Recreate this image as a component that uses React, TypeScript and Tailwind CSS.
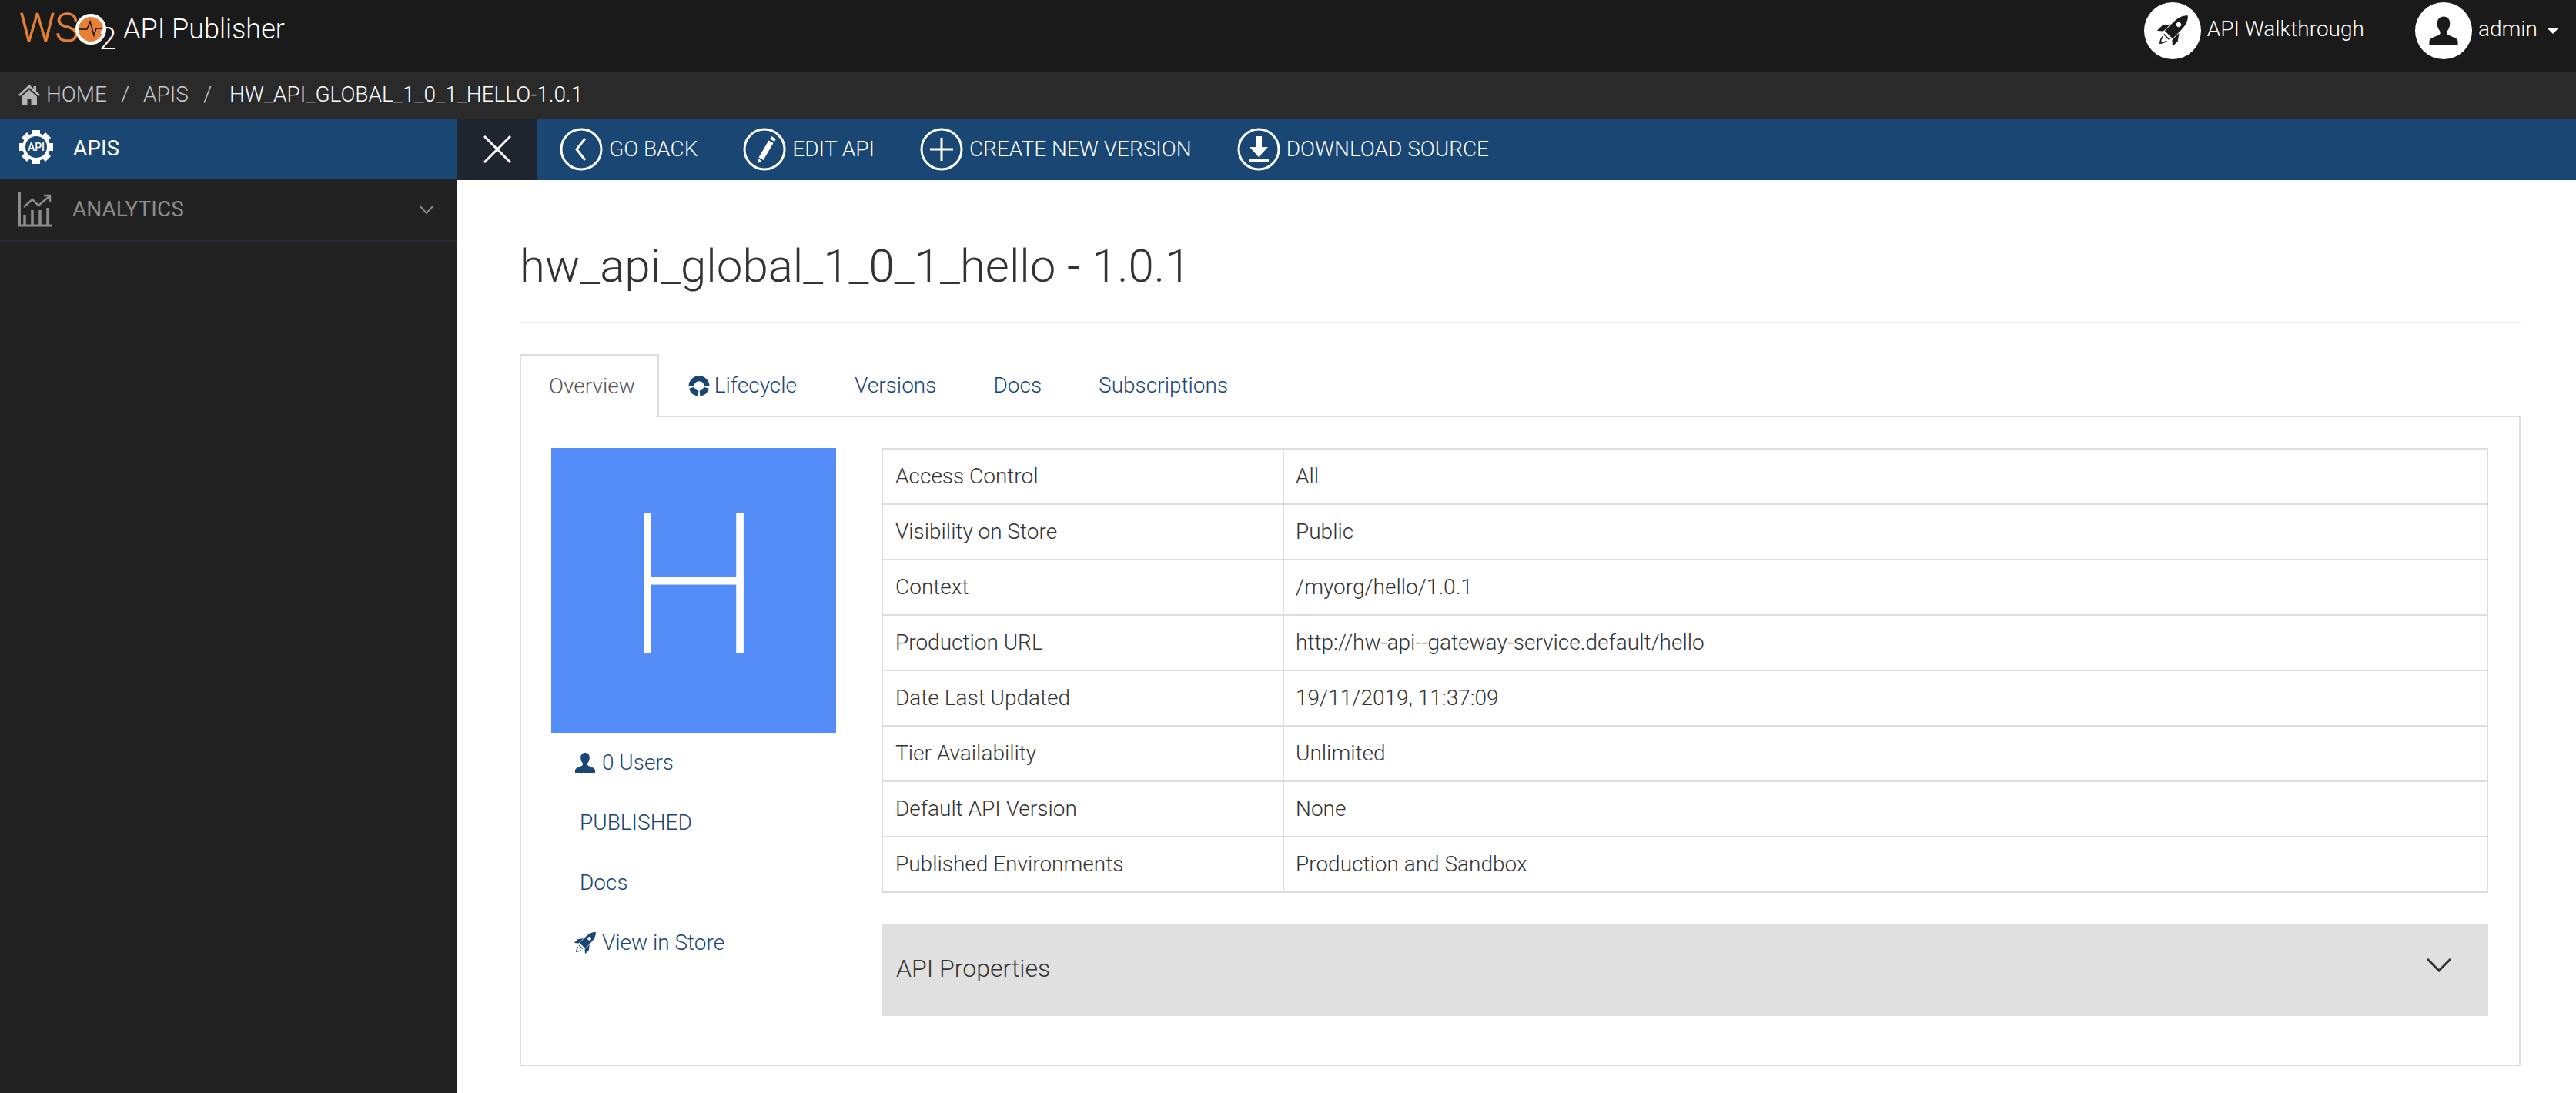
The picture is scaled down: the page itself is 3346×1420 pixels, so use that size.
const font = { fontFamily: 'Roboto, sans-serif' };

function UserIcon({ className }: { className?: string }) {
  return (
    <svg viewBox="0 0 28 28" className={className} fill="currentColor">
      <path d="M14 1c-3.600 0-5.800 2.600-5.800 6.400 0 2.600.9 5 2.300 6.600.6.8.6 2.200.2 3-.5 1-2.400 1.600-4.600 2.400C3.400 20.400 1 21.600 1 24v3h26v-3c0-2.400-2.400-3.600-5.100-4.600-2.200-.8-4.100-1.400-4.600-2.400-.4-.8-.4-2.200.2-3 1.400-1.600 2.300-4 2.300-6.600C19.800 3.600 17.600 1 14 1z" />
    </svg>
  );
}

function RocketIcon({ className }: { className?: string }) {
  return (
    <svg viewBox="0 0 100 100" className={className} fill="currentColor">
      <g transform="rotate(45 50 50) translate(0 -4)">
        <path
          fillRule="evenodd"
          d="M50-16C62-6 68 12 68 32v40H32V32C32 12 38-6 50-16zM50 18a8 8 0 1 0 0 16 8 8 0 0 0 0-16z"
        />
        <path d="M30 44L14 66v24l16-14zM70 44l16 22v24L70 76z" />
        <path d="M37 80h26l-2 4H39z" />
        <path d="M38 90c2 10 6 18 12 24 6-6 10-14 12-24l-5 2c-1 6-3 10-7 14-4-4-6-8-7-14z" />
      </g>
    </svg>
  );
}

function HomeIcon() {
  return (
    <svg viewBox="0 0 28 26" className="mr-[8px] h-[26px] w-[28px]" fill="#b4b4b4">
      <path d="M14 0L0 13l1.800 2L14 4l12.200 11 1.800-2-5-4.600V2h-3.500v3.200z" />
      <path d="M14 6.500L4 15.500V26h7.500v-8h5v8H24V15.500z" />
    </svg>
  );
}

function GearIcon() {
  const teeth = [0, 45, 90, 135, 180, 225, 270, 315];
  return (
    <svg viewBox="0 0 46 46" className="mb-[4px] h-[46px] w-[46px]">
      {teeth.map((a) => (
        <rect key={a} x="18" y="1" width="10" height="10" fill="white" transform={`rotate(${a} 23 23)`} />
      ))}
      <circle cx="23" cy="23" r="18" fill="white" />
      <circle cx="23" cy="23" r="14" fill="#1a4673" />
      <text x="23" y="28" textAnchor="middle" fontSize="14" fontWeight="500" fill="white" fontFamily="Roboto, sans-serif">
        API
      </text>
    </svg>
  );
}

function AnalyticsIcon() {
  return (
    <svg viewBox="0 0 44 45" className="h-[45px] w-[44px]" fill="none" stroke="#8c8c8c">
      <path d="M1.500 0v43H44" strokeWidth="3" />
      <path d="M8 42V29M18 42V23M28 42V23M38 42V20" strokeWidth="3.500" />
      <path d="M7 19L18 9l8 8L40 5" strokeWidth="2.500" />
      <path d="M33 4h8v9" strokeWidth="2.500" />
    </svg>
  );
}

function CircleIcon({ children }: { children: React.ReactNode }) {
  return (
    <svg viewBox="0 0 56 56" className="h-[56px] w-[56px] shrink-0" fill="none" stroke="white">
      <circle cx="28" cy="28" r="26" strokeWidth="3" />
      {children}
    </svg>
  );
}

function LifecycleIcon() {
  return (
    <svg viewBox="0 0 28 28" className="h-[28px] w-[28px]" fill="none" stroke="#1a4673" strokeWidth="7">
      <path d="M4 14.700A10 10 0 0 1 24 14.700" />
      <path d="M23.600 16.800A10 10 0 0 1 15 23.900" />
      <path d="M13 23.900A10 10 0 0 1 4.400 16.800" />
    </svg>
  );
}

function Toolbar() {
  const items = [
    { label: 'GO BACK', icon: <path d="M33 14L22 28l11 14" strokeWidth="3" /> },
    {
      label: 'EDIT API',
      icon: (
        <g fill="white" stroke="none">
          <path d="M37 11l6 3.500-2 3.500-6-3.500z" />
          <path d="M33.500 16.500l6 3.500-13 22-6-3.500z" />
          <path d="M19.500 40l5 3-5.500 3.500z" />
        </g>
      ),
    },
    { label: 'CREATE NEW VERSION', icon: <path d="M28 13v30M13 28h30" strokeWidth="3" /> },
    {
      label: 'DOWNLOAD SOURCE',
      icon: (
        <g fill="white" stroke="none">
          <path d="M24 11h8v14h8L28 38 16 25h8z" />
          <rect x="15" y="41" width="26" height="3.500" />
        </g>
      ),
    },
  ];
  return (
    <div className="flex h-[80px] flex-1 items-center gap-[59px] bg-[#1a4673] pl-[29px]">
      {items.map((item) => (
        <div key={item.label} className="flex items-center gap-[8px]">
          <CircleIcon>{item.icon}</CircleIcon>
          <span className="text-[28px] font-light text-white">{item.label}</span>
        </div>
      ))}
    </div>
  );
}

export default function App() {
  const rows = [
    ['Access Control', 'All'],
    ['Visibility on Store', 'Public'],
    ['Context', '/myorg/hello/1.0.1'],
    ['Production URL', 'http://hw-api--gateway-service.default/hello'],
    ['Date Last Updated', '19/11/2019, 11:37:09'],
    ['Tier Availability', 'Unlimited'],
    ['Default API Version', 'None'],
    ['Published Environments', 'Production and Sandbox'],
  ];

  return (
    <div className="flex h-[1420px] w-[3346px] flex-col overflow-hidden bg-white" style={font}>
      {/* Header */}
      <header className="flex h-[94px] shrink-0 justify-between bg-[#1a1a1a] pl-[25px] pr-[22px]">
        <div className="flex items-center">
          <div className="relative h-[94px] w-[135px]">
            <span className="mt-[3px] block text-[52px] font-light leading-[68px] text-[#e68035] [-webkit-text-stroke:0.5px_#e68035]">WS</span>
            <span className="absolute left-[73px] top-[18px] flex h-[40px] w-[40px] items-center justify-center rounded-full border-[4px] border-white bg-[#e68035]">
              <svg viewBox="0 0 32 32" className="h-[32px] w-[32px] shrink-0" fill="none" stroke="#111" strokeWidth="1.500">
                <path d="M1 16h10l4-10 5 18 3-9h8" />
              </svg>
            </span>
            <span className="absolute left-[104px] top-[31px] text-[40px] font-light leading-[40px] text-white">2</span>
          </div>
          <span className="mb-[18px] text-[36px] font-light leading-[72px] text-white">API Publisher</span>
        </div>
        <div className="flex items-start pt-[3px]">
          <div className="flex h-[74px] items-center gap-[8px]">
            <span className="flex h-[74px] w-[74px] items-center justify-center rounded-full bg-white text-[#1a1a1a]">
              <RocketIcon className="h-[40px] w-[40px]" />
            </span>
            <span className="mb-[4px] text-[28px] font-light text-white">API Walkthrough</span>
          </div>
          <div className="ml-[66px] flex h-[74px] items-center gap-[8px]">
            <span className="flex h-[74px] w-[74px] items-center justify-center rounded-full bg-white text-[#1a1a1a]">
              <UserIcon className="h-[40px] w-[40px]" />
            </span>
            <span className="mb-[4px] text-[28px] font-light text-white">admin</span>
            <span className="ml-[4px] h-0 w-0 border-x-[8px] border-t-[8px] border-x-transparent border-t-white" />
          </div>
        </div>
      </header>

      {/* Breadcrumb */}
      <nav className="flex h-[60px] shrink-0 items-center bg-[#2a2a2a] pb-[3px] pl-[24px] text-[28px] font-light text-[#c8c8c8]">
        <HomeIcon />
        <span>HOME</span>
        <span className="mx-[18px]">/</span>
        <span>APIS</span>
        <span className="mx-[19px]">/</span>
        <span className="ml-[4px] text-white">HW_API_GLOBAL_1_0_1_HELLO-1.0.1</span>
      </nav>

      <div className="flex min-h-0 flex-1">
        {/* Sidebar */}
        <aside className="w-[594px] shrink-0 bg-[#222222]">
          <div className="flex h-[78px] items-center gap-[25px] bg-[#1a4673] pl-[24px] text-[28px] text-white">
            <GearIcon />
            <span>APIS</span>
          </div>
          <div className="flex h-[82px] items-center gap-[26px] border-b-2 border-[#262a35] pl-[24px] pr-[30px] text-[28px] text-[#8c8c8c]">
            <AnalyticsIcon />
            <span className="flex-1">ANALYTICS</span>
            <svg viewBox="0 0 20 12" className="h-[12px] w-[20px]" fill="none" stroke="#8c8c8c" strokeWidth="2">
              <path d="M1 1l9 10 9-10" />
            </svg>
          </div>
        </aside>

        <main className="min-w-0 flex-1">
          <div className="flex">
            <div className="flex h-[80px] w-[104px] items-center justify-center bg-[#1f2630]">
              <svg viewBox="0 0 36 36" className="h-[36px] w-[36px]" fill="none" stroke="white" strokeWidth="3">
                <path d="M1 1l34 34M35 1L1 35" />
              </svg>
            </div>
            <Toolbar />
          </div>

          <div className="pl-[81px] pr-[72px]">
            <h1 className="mt-[70px] border-b-2 border-[#eeeeee] pb-[30px] text-[60px] font-light leading-[84px] text-[#333333]">
              hw_api_global_1_0_1_hello - 1.0.1
            </h1>

            {/* Tabs */}
            <div className="mt-[40px] flex h-[82px] items-stretch text-[28px] font-light text-[#1a4673]">
              <div className="relative z-10 flex items-center border-2 border-b-0 border-[#dddddd] bg-white pl-[36px] pr-[29px] text-[#555555]">
                Overview
              </div>
              <div className="flex items-center gap-[6px] px-[38px]">
                <LifecycleIcon />
                Lifecycle
              </div>
              <div className="flex items-center px-[37px]">Versions</div>
              <div className="flex items-center px-[37px]">Docs</div>
              <div className="flex items-center px-[37px]">Subscriptions</div>
            </div>

            {/* Panel */}
            <div className="-mt-[2px] flex h-[845px] border-2 border-[#dddddd] pl-[39px] pr-[40px] pt-[40px]">
              <div className="w-[429px] shrink-0 text-[28px] font-light text-[#1a4673]">
                <div className="flex h-[370px] w-[370px] items-center justify-center bg-[#548cf8] pb-[12px] text-[250px] font-thin leading-none text-white [-webkit-text-stroke:3px_white]">
                  H
                </div>
                <div className="ml-[30px] flex flex-col">
                  <div className="flex h-[78px] items-center gap-[8px]">
                    <UserIcon className="h-[28px] w-[28px]" />
                    <span>0 Users</span>
                  </div>
                  <div className="flex h-[78px] items-center pl-[7px]">PUBLISHED</div>
                  <div className="flex h-[78px] items-center pl-[7px]">Docs</div>
                  <div className="flex h-[78px] items-center gap-[8px]">
                    <RocketIcon className="h-[28px] w-[28px]" />
                    <span>View in Store</span>
                  </div>
                </div>
              </div>

              <div className="min-w-0 flex-1">
                <table className="w-full table-fixed border-collapse border-2 border-[#dddddd] text-[28px] font-light text-[#333333]">
                  <tbody>
                    {rows.map(([label, value]) => (
                      <tr key={label} className="h-[72px]">
                        <td className="w-[521px] border-2 border-[#dddddd] pl-[16px]">{label}</td>
                        <td className="border-2 border-[#dddddd] pl-[15px]">{value}</td>
                      </tr>
                    ))}
                  </tbody>
                </table>
                <div className="mt-[40px] flex h-[120px] items-center justify-between bg-[#e0e0e0] pl-[19px] pr-[48px] text-[32px] font-light text-[#333333]">
                  <span className="pb-[4px]">API Properties</span>
                  <svg viewBox="0 0 32 18" className="mb-[12px] h-[18px] w-[32px]" fill="none" stroke="#333" strokeWidth="3">
                    <path d="M1 1l15 15L31 1" />
                  </svg>
                </div>
              </div>
            </div>
          </div>
        </main>
      </div>
    </div>
  );
}
